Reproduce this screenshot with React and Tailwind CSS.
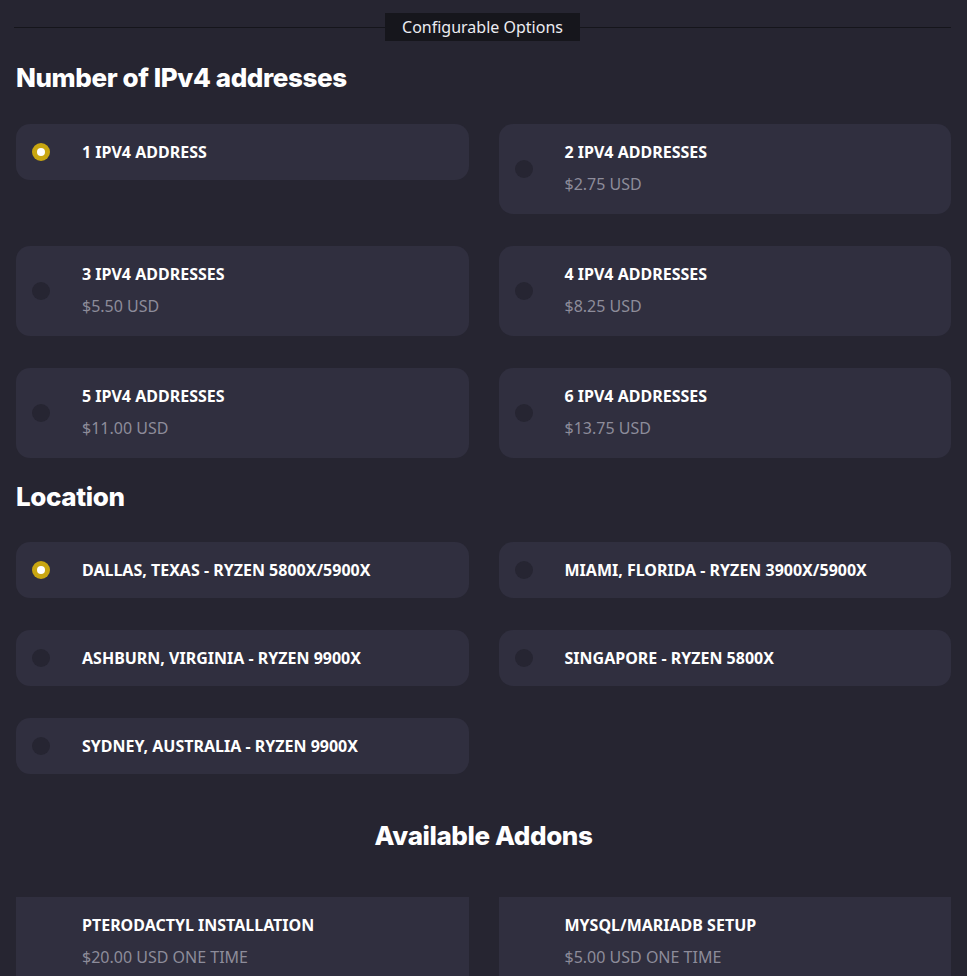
import React, { useState } from 'react';

const ipv4Options = [
  { id: 1, name: '1 IPv4 Address' },
  { id: 2, name: '2 IPv4 Addresses', price: '$2.75 USD' },
  { id: 3, name: '3 IPv4 Addresses', price: '$5.50 USD' },
  { id: 4, name: '4 IPv4 Addresses', price: '$8.25 USD' },
  { id: 5, name: '5 IPv4 Addresses', price: '$11.00 USD' },
  { id: 6, name: '6 IPv4 Addresses', price: '$13.75 USD' }
];

const locations = [
  { id: 'dal', name: 'Dallas, Texas - Ryzen 5800X/5900X' },
  { id: 'mia', name: 'Miami, Florida - Ryzen 3900X/5900X' },
  { id: 'ash', name: 'Ashburn, Virginia - Ryzen 9900X' },
  { id: 'sgp', name: 'Singapore - Ryzen 5800X' },
  { id: 'syd', name: 'Sydney, Australia - Ryzen 9900X' }
];

const addons = [
  { id: 'ptero', name: 'Pterodactyl Installation', price: '$20.00 USD One Time' },
  { id: 'mysql', name: 'MySQL/MariaDB Setup', price: '$5.00 USD One Time' }
];

const Radio = ({ checked }) => (
  <span
    className={
      checked
        ? 'w-[18px] h-[18px] rounded-full bg-[#c9a611] flex items-center justify-center shrink-0'
        : 'w-[18px] h-[18px] rounded-full bg-[#262532] shrink-0'
    }
  >
    {checked && <span className="w-[8px] h-[8px] rounded-full bg-white" />}
  </span>
);

const OptionCard = ({ item, checked, onSelect }) => (
  <button
    onClick={onSelect}
    className="flex items-center text-left bg-[#302f3f] rounded-[14px] pl-[16px] pr-4 py-[18px]"
  >
    <Radio checked={checked} />
    <div className="ml-[32px] flex flex-col">
      <span className="text-[16px] leading-[20px] font-bold uppercase text-white">{item.name}</span>
      {item.price && (
        <span className="mt-[11px] text-[16px] leading-[23px] text-[#8d8c9a]">{item.price}</span>
      )}
    </div>
  </button>
);

const Heading = ({ children, className }) => (
  <h2
    className={
      'text-[26px] leading-[32px] font-extrabold text-white tracking-[-0.4px] ' + (className || '')
    }
    style={{ fontFamily: 'Inter, "Noto Sans", sans-serif' }}
  >
    {children}
  </h2>
);

export default function App() {
  const [ipv4, setIpv4] = useState(1);
  const [loc, setLoc] = useState('dal');

  return (
    <div
      className="min-h-screen bg-[#262531] px-[16px] pt-[13px] pb-10"
      style={{ fontFamily: '"Noto Sans", "Open Sans", sans-serif' }}
    >
      {/* Section divider */}
      <div className="flex items-center -ml-[2px]">
        <div className="flex-1 h-px bg-[#15151b]" />
        <div className="bg-[#16161c] text-[#ececf1] text-[16px] leading-[28px] px-[17px]">
          Configurable Options
        </div>
        <div className="flex-1 h-px bg-[#15151b]" />
      </div>

      <Heading className="mt-[21px]">Number of IPv4 addresses</Heading>
      <div className="mt-[30px] grid grid-cols-2 gap-x-[30px] gap-y-[32px] items-start">
        {ipv4Options.map((o) => (
          <OptionCard key={o.id} item={o} checked={ipv4 === o.id} onSelect={() => setIpv4(o.id)} />
        ))}
      </div>

      <Heading className="mt-[23px]">Location</Heading>
      <div className="mt-[29px] grid grid-cols-2 gap-x-[30px] gap-y-[32px] items-start">
        {locations.map((o) => (
          <OptionCard key={o.id} item={o} checked={loc === o.id} onSelect={() => setLoc(o.id)} />
        ))}
      </div>

      <Heading className="mt-[46px] text-center">Available Addons</Heading>
      <div className="mt-[45px] grid grid-cols-2 gap-x-[30px] gap-y-[32px]">
        {addons.map((a) => (
          <div key={a.id} className="bg-[#302f3f] pl-[66px] pr-4 py-[18px] flex flex-col">
            <span className="text-[16px] leading-[20px] font-bold uppercase text-white">{a.name}</span>
            <span className="mt-[11px] text-[16px] leading-[23px] text-[#8d8c9a] uppercase">{a.price}</span>
          </div>
        ))}
      </div>
    </div>
  );
}
